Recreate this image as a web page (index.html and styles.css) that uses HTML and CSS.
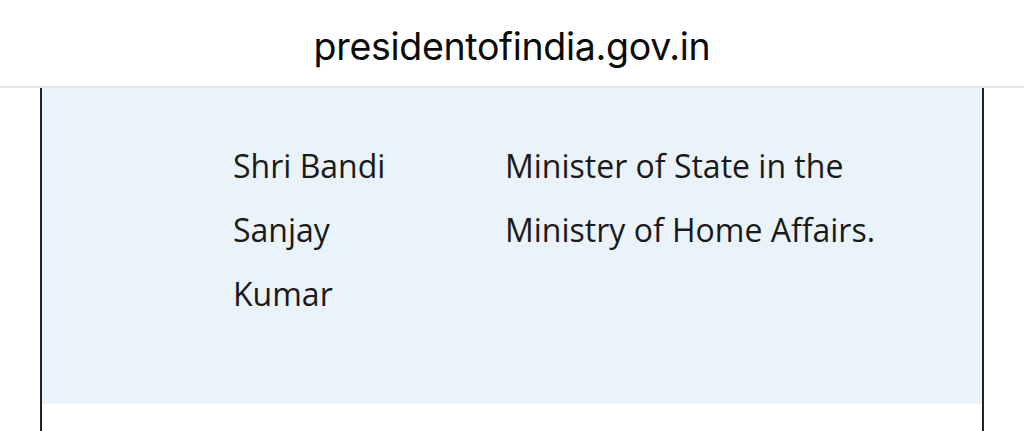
FILE: index.html
```html
<!DOCTYPE html>
<html>
<head>
<meta charset="utf-8">
<link rel="stylesheet" href="styles.css">
</head>
<body>
<header class="urlbar"><span class="url">presidentofindia.gov.in</span></header>
<main class="page">
  <div class="frame">
    <div class="row">
      <div class="name">Shri Bandi Sanjay Kumar</div>
      <div class="role">Minister of State in the Ministry of Home Affairs.</div>
    </div>
  </div>
</main>
</body>
</html>
```
FILE: styles.css
```css
html, body { margin: 0; padding: 0; background: #fff; }
body { width: 1024px; height: 431px; overflow: hidden; }
.urlbar {
  height: 88px;
  border-bottom: 2px solid #e4e4e4;
  display: flex;
  justify-content: center;
  align-items: flex-start;
  background: #fff;
  box-sizing: border-box;
}
.url {
  font-family: Inter, "Liberation Sans", sans-serif;
  font-size: 37.5px;
  color: #0a0a0a;
  line-height: 1;
  margin-top: 28px;
  letter-spacing: -0.3px;
}
.page { padding: 0 40px; }
.frame {
  border-left: 2px solid #222;
  border-right: 2px solid #222;
  height: 343px;
  box-sizing: border-box;
}
.row {
  background: #ebf3fa;
  height: 316px;
  display: flex;
  padding: 46px 0 0 191px;
  box-sizing: border-box;
  font-family: "Open Sans", sans-serif;
  font-size: 32px;
  line-height: 64px;
  color: #1a1a1a;
}
.name { width: 180px; margin-right: 92px; }
.role { width: 400px; }
```
